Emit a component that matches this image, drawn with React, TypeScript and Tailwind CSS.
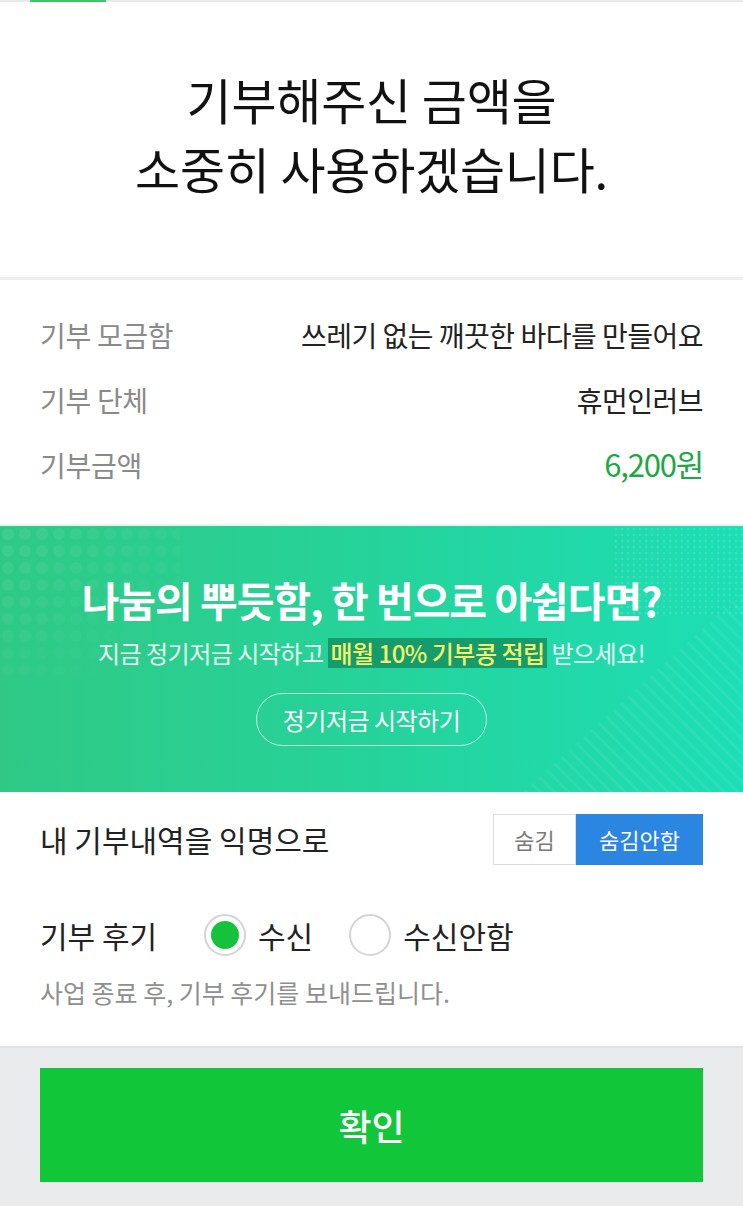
import React, { useState } from 'react';

const font = { fontFamily: '"Noto Sans CJK KR", "Noto Sans", sans-serif' };

const InfoRow: React.FC<{ label: string; value: string; accent?: boolean }> = ({ label, value, accent }) => (
  <div className="flex items-center justify-between h-[65px]">
    <span className="text-[28px] text-[#8a8a8a] tracking-[-0.3px]">{label}</span>
    <span className={accent ? 'text-[31px] text-[#1ea845] tracking-[-1.2px]' : 'text-[28px] text-[#222] tracking-[-0.5px]'}>{value}</span>
  </div>
);

const Radio: React.FC<{ checked: boolean; label: string; onClick: () => void }> = ({ checked, label, onClick }) => (
  <button onClick={onClick} className="flex items-center gap-[12px]">
    <span className="w-[42px] h-[42px] rounded-full border-2 border-[#d4d4d4] bg-white flex items-center justify-center">
      {checked && <span className="w-[28px] h-[28px] rounded-full bg-[#16c23c]" />}
    </span>
    <span className="text-[30px] text-[#222]">{label}</span>
  </button>
);

const App: React.FC = () => {
  const [hidden, setHidden] = useState(false);
  const [receive, setReceive] = useState(true);

  return (
    <div style={font} className="w-[743px] min-h-[1206px] bg-white flex flex-col">
      <div className="h-[2px] bg-[#e8e8e8] relative">
        <div className="absolute left-[30px] top-0 w-[76px] h-[2px] bg-[#3ec46a]" />
      </div>

      <div className="h-[275px] flex flex-col items-center justify-center pb-[13px]">
        <h1 className="text-center text-[49px] leading-[69px] text-[#111] tracking-[-0.2px]">
          기부해주신 금액을<br />소중히 사용하겠습니다.
        </h1>
      </div>

      <div className="h-[3px] bg-[#eeeeee]" />

      <div className="px-[40px] pt-[22px] pb-[27px]">
        <InfoRow label="기부 모금함" value="쓰레기 없는 깨끗한 바다를 만들어요" />
        <InfoRow label="기부 단체" value="휴먼인러브" />
        <InfoRow label="기부금액" value="6,200원" accent />
      </div>

      <div className="relative h-[268px] overflow-hidden bg-gradient-to-r from-[#2fc985] via-[#25d39a] to-[#1ddeb6] flex flex-col items-center border-t-2 border-[#e6f6ef]">
        <svg className="absolute left-0 top-0" width="180" height="150">
          <defs>
            <pattern id="dots" width="17" height="17" patternUnits="userSpaceOnUse">
              <circle cx="8" cy="8" r="6" fill="#ffffff" fillOpacity="0.08" />
            </pattern>
            <linearGradient id="fade" x1="0" y1="0" x2="1" y2="1">
              <stop offset="0" stopColor="#fff" stopOpacity="1" />
              <stop offset="0.9" stopColor="#fff" stopOpacity="0" />
            </linearGradient>
            <mask id="m"><rect width="180" height="150" fill="url(#fade)" /></mask>
          </defs>
          <rect width="180" height="150" fill="url(#dots)" mask="url(#m)" />
        </svg>
        <svg className="absolute right-0 top-0" width="130" height="90">
          <defs>
            <pattern id="dots2" width="6" height="6" patternUnits="userSpaceOnUse">
              <circle cx="3" cy="3" r="1.3" fill="#ffffff" fillOpacity="0.12" />
            </pattern>
          </defs>
          <rect width="130" height="90" fill="url(#dots2)" />
        </svg>
        <svg className="absolute right-0 bottom-0" width="320" height="200">
          <defs>
            <pattern id="stripes" width="10" height="10" patternUnits="userSpaceOnUse" patternTransform="rotate(-45)">
              <rect width="3" height="10" fill="#ffffff" fillOpacity="0.06" />
            </pattern>
          </defs>
          <polygon points="320,0 320,200 100,200" fill="url(#stripes)" />
        </svg>

        <div className="relative mt-[48px] text-[41px] font-bold text-white tracking-[-1px] leading-[50px]">
          나눔의 뿌듯함, 한 번으로 아쉽다면?
        </div>
        <div className="relative mt-[14px] text-[24px] text-white/90 tracking-[-0.5px] leading-[30px] flex items-center">
          <span>지금 정기저금 시작하고&nbsp;</span>
          <span className="bg-[#169c6c] text-[#f3f46a] font-medium px-[2px]">매월 10% 기부콩 적립</span>
          <span>&nbsp;받으세요!</span>
        </div>
        <button className="relative mt-[25px] w-[231px] h-[53px] rounded-full border-[1.5px] border-white/70 text-[24px] text-white tracking-[-0.5px]">
          정기저금 시작하기
        </button>
      </div>

      <div className="px-[40px] pt-[22px]">
        <div className="flex items-center justify-between h-[51px]">
          <span className="text-[30px] text-[#222]">내 기부내역을 익명으로</span>
          <div className="flex h-[51px]">
            <button
              onClick={() => setHidden(true)}
              className={hidden ? 'w-[83px] bg-[#2a86e0] text-white text-[22px]' : 'w-[83px] border border-[#dcdcdc] text-[#7a7a7a] text-[22px] bg-white'}
            >
              숨김
            </button>
            <button
              onClick={() => setHidden(false)}
              className={!hidden ? 'w-[127px] bg-[#2a86e0] text-white text-[22px]' : 'w-[127px] border border-[#dcdcdc] text-[#7a7a7a] text-[22px] bg-white'}
            >
              숨김안함
            </button>
          </div>
        </div>

        <div className="flex items-center mt-[48px] h-[44px]">
          <span className="text-[30px] text-[#222] w-[164px]">기부 후기</span>
          <div className="flex items-center gap-[36px]">
            <Radio checked={receive} label="수신" onClick={() => setReceive(true)} />
            <Radio checked={!receive} label="수신안함" onClick={() => setReceive(false)} />
          </div>
        </div>

        <p className="mt-[19px] text-[25px] text-[#8f8f8f] tracking-[0px] leading-[32px]">
          사업 종료 후, 기부 후기를 보내드립니다.
        </p>
      </div>

      <div className="mt-[38px] flex-1 bg-[#e9ebed] border-t-2 border-[#dfe1e3] px-[40px] pt-[20px] pb-[24px]">
        <button className="w-full h-[114px] bg-[#12c63a] text-white text-[36px] font-medium">확인</button>
      </div>
    </div>
  );
};

export default App;
